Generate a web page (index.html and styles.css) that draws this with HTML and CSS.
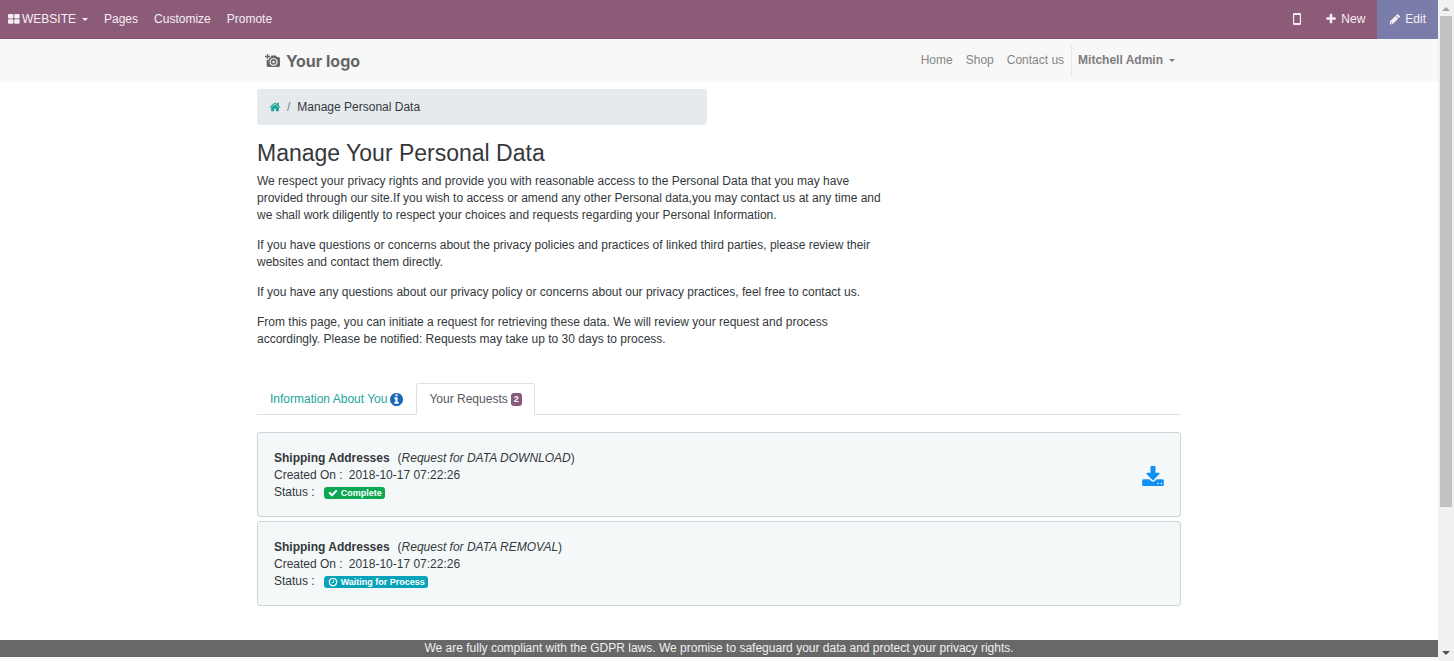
FILE: index.html
```
<!DOCTYPE html>
<html lang="en">
<head>
<meta charset="utf-8">
<title>Manage Personal Data</title>
<link rel="stylesheet" href="styles.css">
</head>
<body>
<div class="page">
  <nav class="admin-bar">
    <button class="admin-item" type="button"><svg class="icon-grid" viewBox="0 0 12 10"><rect width="5.4" height="4.500" rx="1"/><rect x="6.200" width="5.400" height="4.500" rx="1"/><rect y="5.300" width="5.400" height="4.500" rx="1"/><rect x="6.200" y="5.300" width="5.400" height="4.500" rx="1"/></svg>WEBSITE<span class="caret"></span></button>
    <a class="admin-item" href="#">Pages</a>
    <a class="admin-item" href="#">Customize</a>
    <a class="admin-item" href="#">Promote</a>
    <div class="admin-tools">
      <button class="admin-item mobile" type="button" aria-label="Mobile preview"><svg class="icon-mobile" viewBox="0 0 8 12"><path fill-rule="evenodd" d="M1.300 0h5.400Q8 0 8 1.300v9.400Q8 12 6.700 12H1.300Q0 12 0 10.700V1.300Q0 0 1.300 0zM1.200 2v8h5.600V2z"/></svg></button>
      <button class="admin-item" type="button"><svg class="icon" viewBox="0 0 1792 1792"><path d="M1600 736v192q0 40-28 68t-68 28h-416v416q0 40-28 68t-68 28h-192q-40 0-68-28t-28-68v-416h-416q-40 0-68-28t-28-68v-192q0-40 28-68t68-28h416v-416q0-40 28-68t68-28h192q40 0 68 28t28 68v416h416q40 0 68 28t28 68z"/></svg>New</button>
      <button class="admin-item edit" type="button"><svg class="icon" viewBox="0 128 1792 1792"><path d="M440 1560l90-90-180-180-90 90v60h90v120h90zM960 416l416 416-832 832h-416v-416zm683 96q0 53-37 90l-166 166-416-416 166-165q36-38 90-38 53 0 91 38l235 234q37 39 37 91z" fill-rule="evenodd"/></svg>Edit</button>
    </div>
  </nav>

  <header class="site-header">
    <div class="container header-row">
      <a class="logo" href="#"><svg class="icon-camera" viewBox="0 0 14 13"><path fill-rule="evenodd" d="M1.700 0h1.300v1.600H4.700V2.900H3V4.500H1.700V2.900H0V1.600H1.700zM6 1.300h4.200l1 1.400h1.300Q14 2.700 14 4.200v6.300Q14 12 12.500 12H3Q1.500 12 1.500 10.500V5.300h2.400V3.500h1.200zM8 3.700a3.700 3.700 0 1 0 .01 0zM8 4.700a2.700 2.700 0 1 1-.01 0zM8 6.200a1.200 1.200 0 1 0 .01 0z"/></svg>Your logo</a>
      <nav class="site-nav">
        <a href="#">Home</a>
        <a href="#">Shop</a>
        <a href="#">Contact us</a>
        <button class="user-menu" type="button">Mitchell Admin<span class="caret"></span></button>
      </nav>
    </div>
  </header>

  <main class="content">
    <div class="container">
      <nav class="breadcrumb" aria-label="Breadcrumb">
        <a href="#" aria-label="Home"><svg class="icon" viewBox="0 0 1792 1792"><path d="M1472 992v480q0 26-19 45t-45 19h-384v-384h-256v384h-384q-26 0-45-19t-19-45v-480q0-1 .5-3t.5-3l575-474 575 474q1 2 1 6zm223-69l-62 74q-8 9-21 11h-3q-13 0-21-7l-692-577-692 577q-12 8-24 7-13-2-21-11l-62-74q-8-10-7-23.500t11-21.500l719-599q32-26 76-26t76 26l244 204v-195q0-14 9-23t23-9h192q14 0 23 9t9 23v408l219 182q10 8 11 21.500t-7 23.500z"/></svg></a>
        <span class="slash">/</span>
        <span>Manage Personal Data</span>
      </nav>

      <section class="intro">
        <h1>Manage Your Personal Data</h1>
        <p>We respect your privacy rights and provide you with reasonable access to the Personal Data that you may have provided through our site.If you wish to access or amend any other Personal data,you may contact us at any time and we shall work diligently to respect your choices and requests regarding your Personal Information.</p>
        <p>If you have questions or concerns about the privacy policies and practices of linked third parties, please review their websites and contact them directly.</p>
        <p>If you have any questions about our privacy policy or concerns about our privacy practices, feel free to contact us.</p>
        <p>From this page, you can initiate a request for retrieving these data. We will review your request and process accordingly. Please be notified: Requests may take up to 30 days to process.</p>
      </section>

      <nav class="tabs">
        <a class="tab" href="#">Information About You<svg class="icon-info" viewBox="128 128 1536 1536"><path d="M1152 1376v-160q0-14-9-23t-23-9h-96v-512q0-14-9-23t-23-9h-320q-14 0-23 9t-9 23v160q0 14 9 23t23 9h96v320h-96q-14 0-23 9t-9 23v160q0 14 9 23t23 9h448q14 0 23-9t9-23zm-128-896v-160q0-14-9-23t-23-9h-192q-14 0-23 9t-9 23v160q0 14 9 23t23 9h192q14 0 23-9t9-23zm640 416q0 209-103 385.500t-279.500 279.500-385.500 103-385.500-103-279.500-279.500-103-385.500 103-385.500 279.500-279.500 385.500-103 385.500 103 279.500 279.500 103 385.500z"/></svg></a>
        <a class="tab active" href="#">Your Requests<span class="count">2</span></a>
      </nav>

      <section class="requests">
        <article class="request">
          <div>
            <div><strong>Shipping Addresses</strong><span class="kind">(<em>Request for DATA DOWNLOAD</em>)</span></div>
            <div>Created On :<span class="date">2018-10-17 07:22:26</span></div>
            <div class="status">Status :<span class="badge done"><svg class="badge-icon" viewBox="0 0 1792 1792"><path d="M1671 566q0 40-28 68l-724 724-136 136q-28 28-68 28t-68-28l-136-136-362-362q-28-28-28-68t28-68l136-136q28-28 68-28t68 28l294 295 656-657q28-28 68-28t68 28l136 136q28 28 28 68z"/></svg>Complete</span></div>
          </div>
          <a class="download" href="#" aria-label="Download"><svg class="icon-download" viewBox="64 0 1664 1536"><path d="M1344 1344q0-26-19-45t-45-19-45 19-19 45 19 45 45 19 45-19 19-45zm256 0q0-26-19-45t-45-19-45 19-19 45 19 45 45 19 45-19 19-45zm128-224v320q0 40-28 68t-68 28h-1472q-40 0-68-28t-28-68v-320q0-40 28-68t68-28h465l135 136q58 56 136 56t136-56l136-136h464q40 0 68 28t28 68zm-325-569q17 41-14 70l-448 448q-18 19-45 19t-45-19l-448-448q-31-29-14-70 17-39 59-39h256v-448q0-26 19-45t45-19h256q26 0 45 19t19 45v448h256q42 0 59 39z"/></svg></a>
        </article>
        <article class="request">
          <div>
            <div><strong>Shipping Addresses</strong><span class="kind">(<em>Request for DATA REMOVAL</em>)</span></div>
            <div>Created On :<span class="date">2018-10-17 07:22:26</span></div>
            <div class="status">Status :<span class="badge waiting"><svg class="badge-icon" viewBox="0 0 1792 1792"><path d="M1024 544v448q0 14-9 23t-23 9h-320q-14 0-23-9t-9-23v-64q0-14 9-23t23-9h224v-352q0-14 9-23t23-9h64q14 0 23 9t9 23zm416 352q0-148-73-273t-198-198-273-73-273 73-198 198-73 273 73 273 198 198 273 73 273-73 198-198 73-273zm224 0q0 209-103 385.500t-279.500 279.500-385.500 103-385.500-103-279.500-279.500-103-385.500 103-385.500 279.500-279.500 385.500-103 385.500 103 279.500 279.500 103 385.500z"/></svg>Waiting for Process</span></div>
          </div>
        </article>
      </section>
    </div>
  </main>

  <footer class="notice">We are fully compliant with the GDPR laws. We promise to safeguard your data and protect your privacy rights.</footer>
</div>
<div class="scrollbar" aria-hidden="true">
  <span class="arrow up"></span>
  <div class="track"><div class="thumb"></div><div class="rest"></div></div>
  <span class="arrow down"></span>
</div>
</body>
</html>
```
FILE: styles.css
```
* { box-sizing: border-box; }
body {
  margin: 0;
  min-height: 100vh;
  display: grid;
  grid-template-columns: 1fr 16px;
  font: 12px/17px "Liberation Sans", Arial, sans-serif;
  color: #33383c;
  background: #fff;
}
a { color: inherit; text-decoration: none; }
button { font: inherit; color: inherit; background: none; border: 0; padding: 0; cursor: pointer; }
svg { fill: currentColor; flex: none; }
h1, p { margin: 0; }

.page { display: flex; flex-direction: column; padding-bottom: 4px; background: #fafafa; }
.container { width: 100%; max-width: 924px; margin: 0 auto; }

.admin-bar { display: flex; height: 39px; background: #8b5b78; color: #f7eef4; border-bottom: 1px solid #80506e; }
.admin-item { display: flex; align-items: center; padding: 0 8px; }
.admin-tools { display: flex; margin-left: auto; }
.admin-tools .admin-item { padding: 0 12px; }
.admin-tools .edit { background: #7a7caa; margin-bottom: -1px; }
.icon { width: 12px; height: 12px; }
.admin-tools .icon { margin-right: 4px; }
.icon-grid { width: 12px; height: 10px; margin-right: 2px; }
.icon-mobile { width: 8px; height: 12px; }
.caret { display: inline-block; margin-left: 6px; border: 3px solid transparent; border-top-color: currentColor; border-bottom: 0; }

.site-header { background: #f8f8f8; height: 43px; display: flex; }
.header-row { display: flex; align-items: center; justify-content: space-between; }
.logo { display: flex; align-items: center; gap: 6px; padding-left: 8px; font: bold 16px/20px Inter, sans-serif; color: #666; }
.icon-camera { width: 15px; height: 14px; }
.site-nav { display: flex; align-items: center; gap: 13px; color: #858585; }
.user-menu { display: flex; align-items: center; height: 31px; margin-left: -6px; padding: 0 6px; border-left: 1px solid #e8e8e8; font-weight: bold; color: #7d7d7d; }

.content { flex: 1; padding: 7px 0 33px; background: #fff; }
.breadcrumb { display: flex; align-items: center; width: 450px; max-width: 100%; height: 36px; padding: 0 12px; background: #e7eaed; border-radius: 3px; }
.breadcrumb a { display: flex; color: #1aa398; }
.slash { margin: 0 7px 0 6px; color: #777e84; }
.intro { max-width: 630px; padding-top: 14px; }
h1 { font-size: 23px; line-height: 28px; font-weight: normal; margin-bottom: 6px; }
.intro p { margin-bottom: 13px; }

.tabs { display: flex; margin-top: 35px; border-bottom: 1px solid #dde1e5; }
.tab { display: flex; align-items: center; height: 32px; margin-bottom: -1px; padding: 0 12px; border: 1px solid transparent; border-radius: 3px 3px 0 0; color: #21a59b; }
.tab.active { color: #53595f; background: #fff; border-color: #dde1e5 #dde1e5 #fff; }
.icon-info { width: 13px; height: 13px; margin-left: 3px; color: #1a66b8; }
.count { margin-left: 3px; padding: 0 3px; border-radius: 3px; background: #875a7b; color: #fff; font-weight: bold; font-size: 9px; line-height: 13px; }

.requests { display: grid; gap: 4px; margin-top: 17px; }
.request { display: flex; align-items: center; justify-content: space-between; padding: 17px 16px 15px; border: 1px solid #ced6da; border-radius: 3px; background: #f5f8f9; }
.kind { margin-left: 8px; }
.date { margin-left: 6px; }
.status { display: flex; align-items: center; }
.badge { display: flex; align-items: center; gap: 3px; margin-left: 9px; padding: 0 3px 0 4px; border-radius: 3px; color: #fff; font-weight: bold; font-size: 9px; line-height: 12px; }
.badge-icon { width: 10px; height: 10px; }
.done { background: #0ca750; }
.waiting { background: #08a3ba; }
.download { display: flex; color: #0f90f5; }
.icon-download { width: 22px; height: 20px; }

.notice { background: #686868; color: #f0f0f0; text-align: center; }

.scrollbar { display: flex; flex-direction: column; align-items: center; background: #f1f1f1; }
.track { flex: 1; display: flex; flex-direction: column; width: 12px; margin: 5px 0; }
.thumb { flex: 78; background: #c1c1c1; }
.rest { flex: 22; }
.arrow { border: 4px solid transparent; }
.up { border-top: 0; border-bottom-color: #a3a3a3; margin-top: 7px; }
.down { border-bottom: 0; border-top-color: #505050; margin-bottom: 6px; }
```
